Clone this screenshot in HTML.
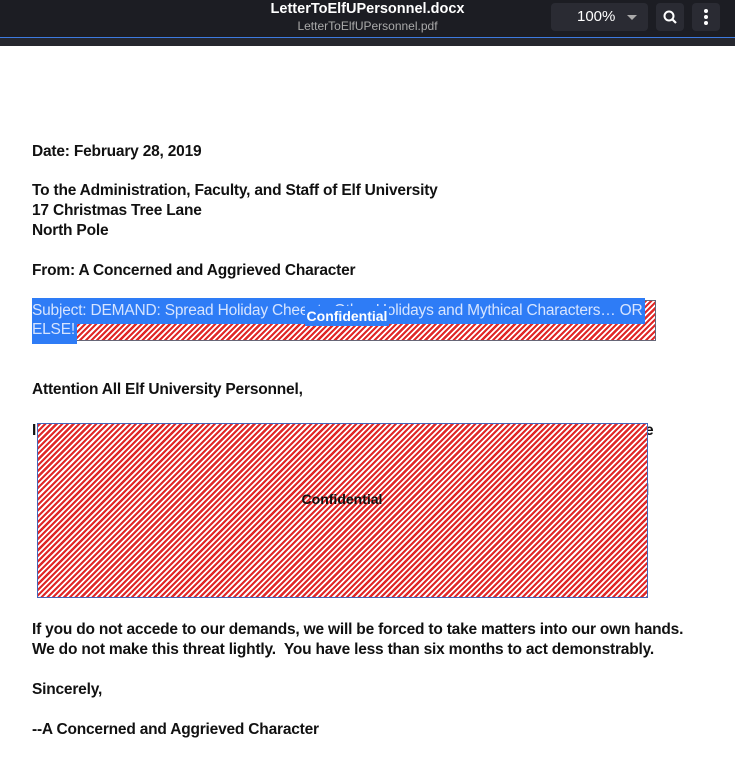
<!DOCTYPE html>
<html><head><meta charset="utf-8"><style>
body{margin:0;width:735px;height:763px;background:#fff;position:relative;overflow:hidden;font-family:"Liberation Sans",sans-serif}
.hdr{position:absolute;left:0;top:0;width:735px;height:37px;background:#1c1d23;border-bottom:1px solid #3d7ae0}
.band{position:absolute;left:0;top:38px;width:735px;height:8px;background:#26272e}
.t1{position:absolute;left:0;width:735px;text-align:center;top:1px;color:#fff;font-weight:bold;font-size:14.5px}
.t2{position:absolute;left:0;width:735px;text-align:center;top:19px;color:#aaa;font-size:12px}
.btn{position:absolute;top:3px;height:28px;background:#2a2b33;border-radius:4px;color:#fff}
.l{position:absolute;left:32px;font-weight:bold;font-size:15.5px;letter-spacing:-0.2px;color:#111;white-space:nowrap;line-height:20px}
.hatch{background:repeating-linear-gradient(135deg,#e02828 0 2.2px,#fff 2.2px 4px)}
</style></head><body>
<div class="hdr"><div class="t1">LetterToElfUPersonnel.docx</div><div class="t2">LetterToElfUPersonnel.pdf</div>
<div class="btn" style="left:551px;width:97px"><span style="position:absolute;left:26px;top:5px;font-size:15px">100%</span><span style="position:absolute;left:76px;top:12px;border-left:5px solid transparent;border-right:5px solid transparent;border-top:5px solid #aaa;width:0;height:0"></span></div>
<div class="btn" style="left:656px;width:28px"><svg width="28" height="28"><circle cx="13" cy="13" r="4.5" stroke="#fff" stroke-width="2" fill="none"/><path d="M16 16l4 4" stroke="#fff" stroke-width="2.2"/></svg></div>
<div class="btn" style="left:692px;width:28px"><svg width="28" height="28"><circle cx="14" cy="8" r="2" fill="#fff"/><circle cx="14" cy="14" r="2" fill="#fff"/><circle cx="14" cy="20" r="2" fill="#fff"/></svg></div>
</div>
<div class="band"></div>
<div class="l" style="top:142px">Date: February 28, 2019</div>
<div class="l" style="top:181px">To the Administration, Faculty, and Staff of Elf University</div>
<div class="l" style="top:201px">17 Christmas Tree Lane</div>
<div class="l" style="top:221px">North Pole</div>
<div class="l" style="top:261px">From: A Concerned and Aggrieved Character</div>
<div class="hatch" style="position:absolute;left:32px;top:300px;width:622px;height:39px;border:1px solid #667"></div>
<div style="position:absolute;left:32px;top:298px;width:613px;height:26px;background:#2e7cf6"></div>
<div style="position:absolute;left:32px;top:324px;width:45px;height:20px;background:#2e7cf6"></div>
<div style="position:absolute;left:32px;top:301px;width:616px;font-size:15.5px;letter-spacing:-0.2px;color:#d6e4ff;line-height:19px">Subject: DEMAND: Spread Holiday Cheer to Other Holidays and Mythical Characters… OR ELSE!</div>
<div style="position:absolute;left:305px;top:306px;width:84px;height:20px;background:#2e7cf6;color:#fff;font-weight:bold;font-size:14px;text-align:center;line-height:20px">Confidential</div>
<div class="l" style="top:380px">Attention All Elf University Personnel,</div>
<div class="l" style="top:421px">I</div><div class="l" style="top:421px;left:645px">e</div>
<div class="l" style="top:481px;left:645px">l</div>
<div class="hatch" style="position:absolute;left:37px;top:423px;width:609px;height:173px;border:1px solid #4466bb"></div>
<div style="position:absolute;left:37px;top:491px;width:610px;text-align:center;font-weight:bold;font-size:14px;color:#111">Confidential</div>
<div class="l" style="top:620px">If you do not accede to our demands, we will be forced to take matters into our own hands.</div>
<div class="l" style="top:640px">We do not make this threat lightly.&nbsp; You have less than six months to act demonstrably.</div>
<div class="l" style="top:680px">Sincerely,</div>
<div class="l" style="top:720px">--A Concerned and Aggrieved Character</div>
</body></html>
